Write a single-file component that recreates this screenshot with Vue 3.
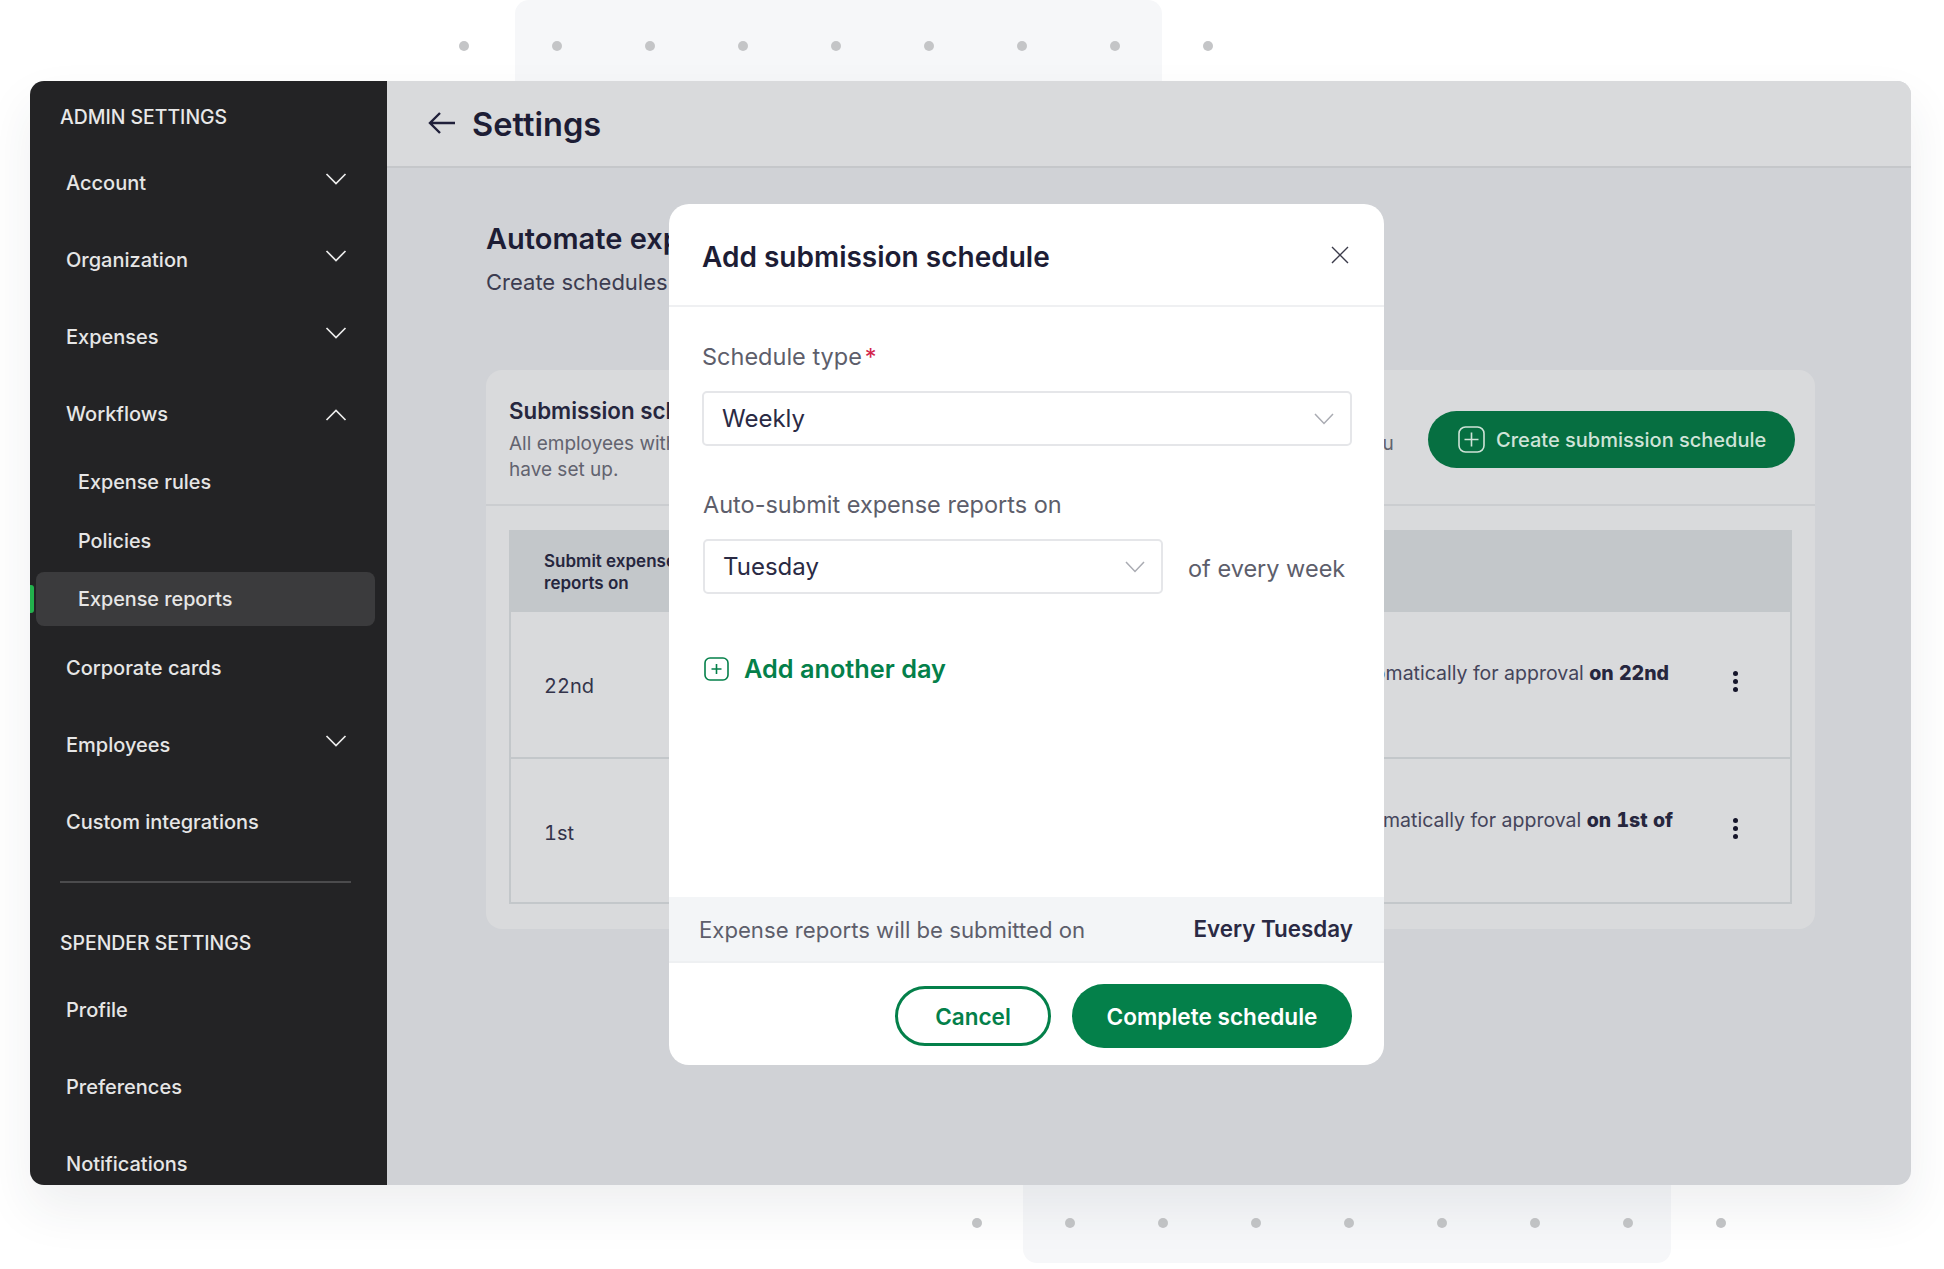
<script setup>
const dots = Array.from({ length: 9 }, (_, i) => i)
const adminTop = [
  { label: 'Account', chevron: 'down' },
  { label: 'Organization', chevron: 'down' },
  { label: 'Expenses', chevron: 'down' },
  { label: 'Workflows', chevron: 'up' }
]
const subItems = [
  { label: 'Expense rules', active: false },
  { label: 'Policies', active: false },
  { label: 'Expense reports', active: true }
]
const adminBottom = [
  { label: 'Corporate cards' },
  { label: 'Employees', chevron: 'down' },
  { label: 'Custom integrations' }
]
const spender = ['Profile', 'Preferences', 'Notifications']
</script>

<template>
  <div class="stage">
    <div class="deco deco-top">
      <div class="patch"></div>
      <div class="dots"><span v-for="d in dots" :key="d" class="dot"></span></div>
    </div>
    <div class="deco deco-bottom">
      <div class="patch"></div>
      <div class="dots"><span v-for="d in dots" :key="d" class="dot"></span></div>
    </div>

    <div class="window">
      <aside class="sidebar">
        <div class="section-title first">ADMIN SETTINGS</div>
        <div v-for="item in adminTop" :key="item.label" class="nav-item">
          <span>{{ item.label }}</span>
          <svg v-if="item.chevron" class="chev" :class="{ up: item.chevron === 'up' }" width="22" height="14" viewBox="0 0 22 14" fill="none">
            <path d="M1.5 2 L11 11.5 L20.5 2" stroke="#ECECEC" stroke-width="1.7" />
          </svg>
        </div>
        <div v-for="item in subItems" :key="item.label" class="sub-item" :class="{ active: item.active }">
          <i v-if="item.active" class="marker"></i>
          <span class="sub-pill">{{ item.label }}</span>
        </div>
        <div v-for="item in adminBottom" :key="item.label" class="nav-item">
          <span>{{ item.label }}</span>
          <svg v-if="item.chevron" class="chev" width="22" height="14" viewBox="0 0 22 14" fill="none">
            <path d="M1.5 2 L11 11.5 L20.5 2" stroke="#ECECEC" stroke-width="1.7" />
          </svg>
        </div>
        <div class="side-divider"></div>
        <div class="section-title second">SPENDER SETTINGS</div>
        <div v-for="label in spender" :key="label" class="nav-item">
          <span>{{ label }}</span>
        </div>
      </aside>

      <main class="main">
        <header class="topbar">
          <svg class="back" width="28" height="24" viewBox="0 0 28 24" fill="none">
            <path d="M27 12 H2 M12 2 L2 12 L12 22" stroke="#20203A" stroke-width="2.4" />
          </svg>
          <h1>Settings</h1>
        </header>

        <section class="content">
          <h2>Automate expense report submissions</h2>
          <p class="lead">Create schedules to submit expense reports automatically</p>

          <div class="card">
            <div class="card-head">
              <div class="card-copy">
                <h3>Submission schedules</h3>
                <p>All employees with corporate cards will have expenses auto-submitted as per these schedules you<br />have set up.</p>
              </div>
              <button class="create-btn">
                <svg width="27" height="27" viewBox="0 0 27 27" fill="none">
                  <rect x="1" y="1" width="25" height="25" rx="6.5" stroke="#CFE3D8" stroke-width="1.6" />
                  <path d="M13.5 6.5 V20.5 M6.5 13.5 H20.5" stroke="#CFE3D8" stroke-width="1.6" />
                </svg>
                <span>Create submission schedule</span>
              </button>
            </div>
            <div class="table-wrap">
              <div class="table">
                <div class="thead">
                  <div class="th">Submit expense<br />reports on</div>
                </div>
                <div class="tr">
                  <div class="td-date">22nd</div>
                  <div class="td-desc desc-a">Expenses are auto-submitted automatically for approval <b>on 22nd</b></div>
                  <div class="kebab"><i></i><i></i><i></i></div>
                </div>
                <div class="tr">
                  <div class="td-date">1st</div>
                  <div class="td-desc desc-b">Expenses are auto-submitted automatically for approval <b>on 1st of</b></div>
                  <div class="kebab"><i></i><i></i><i></i></div>
                </div>
              </div>
            </div>
          </div>
        </section>
      </main>
    </div>

    <div class="modal">
      <div class="modal-head">
        <h2>Add submission schedule</h2>
        <svg width="18" height="18" viewBox="0 0 18 18" fill="none">
          <path d="M1 1 L17 17 M17 1 L1 17" stroke="#3B3B4A" stroke-width="1.4" />
        </svg>
      </div>
      <div class="modal-body">
        <label class="label">Schedule type<em>*</em></label>
        <div class="select">
          <span>Weekly</span>
          <svg width="20" height="12" viewBox="0 0 20 12" fill="none"><path d="M1 1 L10 10.5 L19 1" stroke="#A9ABB2" stroke-width="1.5" /></svg>
        </div>
        <label class="label label-2">Auto-submit expense reports on</label>
        <div class="day-row">
          <div class="select day">
            <span>Tuesday</span>
            <svg width="20" height="12" viewBox="0 0 20 12" fill="none"><path d="M1 1 L10 10.5 L19 1" stroke="#A9ABB2" stroke-width="1.5" /></svg>
          </div>
          <span class="every">of every week</span>
        </div>
        <div class="add-day">
          <svg width="25" height="24" viewBox="0 0 25 24" fill="none">
            <rect x="1" y="1" width="23" height="22" rx="5" stroke="#04804A" stroke-width="1.6" />
            <path d="M12.5 7 V17 M7.5 12 H17.5" stroke="#04804A" stroke-width="1.6" />
          </svg>
          <span>Add another day</span>
        </div>
      </div>
      <div class="summary">
        <span>Expense reports will be submitted on</span>
        <b>Every Tuesday</b>
      </div>
      <div class="modal-foot">
        <button class="btn-cancel">Cancel</button>
        <button class="btn-complete">Complete schedule</button>
      </div>
    </div>
  </div>
</template>

<style scoped>
.stage {
  position: relative;
  width: 1944px;
  height: 1269px;
  overflow: hidden;
  background: #fff;
  font-family: Inter, "Liberation Sans", sans-serif;
  color: #24243c;
  padding: 81px 33px 0 30px;
  box-sizing: border-box;
}
.deco { position: absolute; }
.deco-top { left: 459px; top: 0; width: 760px; height: 81px; }
.deco-bottom { left: 972px; top: 1185px; width: 760px; height: 78px; }
.patch { position: absolute; background: #f6f7f9; }
.deco-top .patch { left: 56px; top: 0; width: 647px; height: 81px; border-top-left-radius: 14px; border-top-right-radius: 14px; }
.deco-bottom .patch { left: 51px; top: 0; width: 648px; height: 78px; border-bottom-left-radius: 14px; border-bottom-right-radius: 14px; }
.dots { position: absolute; left: 0; display: flex; gap: 83px; }
.deco-top .dots { top: 41px; }
.deco-bottom .dots { top: 33px; }
.dot { width: 10px; height: 10px; border-radius: 50%; background: #c4c5c7; }

.window {
  position: relative;
  display: flex;
  width: 1881px;
  height: 1104px;
  border-radius: 14px;
  overflow: hidden;
  box-shadow: 0 24px 50px rgba(40, 50, 70, 0.08);
}
.sidebar {
  flex: 0 0 357px;
  background: #232325;
  color: #e6e6e6;
  overflow: hidden;
  box-sizing: border-box;
}
.section-title {
  font-size: 19.4px;
  line-height: 24px;
  font-weight: 500;
  padding-left: 30px;
  color: #e8e8e8;
}
.section-title.first { margin-top: 24px; margin-bottom: 15.5px; }
.section-title.second { margin-top: 48px; margin-bottom: 16.5px; }
.nav-item {
  height: 77px;
  flex: none;
  display: flex;
  align-items: center;
  justify-content: space-between;
  padding: 0 40px 0 36px;
  font-size: 20px;
  font-weight: 500;
}
.chev { margin-top: -9px; }
.chev.up { transform: rotate(180deg); margin-top: 1px; }
.sub-item {
  position: relative;
  height: 59px;
  display: flex;
  align-items: center;
  font-size: 19.8px;
  font-weight: 500;
}
.sub-pill {
  flex: 1;
  margin: 0 12px 0 6px;
  height: 54px;
  line-height: 54px;
  padding-left: 42px;
  border-radius: 8px;
}
.sub-item.active .sub-pill { background: #3b3b3d; margin-top: -3px; }
.marker {
  position: absolute;
  left: 0;
  top: 14px;
  width: 4px;
  height: 28px;
  background: #22b14c;
  border-radius: 0 3px 3px 0;
}
.side-divider { height: 2px; margin: 20px 36px 0 30px; background: #4b4b4d; }

.main { flex: 1; background: #d0d2d6; min-width: 0; }
.topbar {
  height: 87px;
  box-sizing: border-box;
  background: #d9dadc;
  border-bottom: 2px solid #c5c7ca;
  display: flex;
  align-items: center;
  padding-left: 41px;
  gap: 16px;
}
.topbar h1 { margin: 1px 0 0; font-size: 32.6px; line-height: 40px; font-weight: 600; color: #1d1d35; }
.back { margin-top: -1px; }
.content { padding: 0 96px 0 99px; }
.content h2 {
  margin: 0;
  padding-top: 51px;
  font-size: 29px;
  line-height: 40px;
  font-weight: 600;
  color: #1d1d35;
  white-space: nowrap;
}
.lead { margin: 8px 0 0; font-size: 22px; line-height: 30px; color: #3c3c50; white-space: nowrap; }
.card {
  margin-top: 73px;
  height: 559px;
  background: #d9dadc;
  border-radius: 16px;
}
.card-head {
  height: 136px;
  box-sizing: border-box;
  border-bottom: 2px solid #cbcdd0;
  padding: 22px 20px 0 23px;
  display: flex;
  justify-content: space-between;
  align-items: flex-start;
}
.card-copy h3 { margin: 4px 0 0; font-size: 22.3px; line-height: 30px; font-weight: 600; color: #26263e; white-space: nowrap; }
.card-copy p { margin: 5px 0 0; font-size: 19px; line-height: 26px; color: #62636f; white-space: nowrap; }
.create-btn {
  margin-top: 19px;
  flex: none;
  width: 367px;
  height: 57px;
  border: 0;
  border-radius: 29px;
  background: #066f41;
  color: #cfe3d8;
  display: flex;
  align-items: center;
  gap: 11px;
  padding-left: 30px;
  font: 500 20px Inter, "Liberation Sans", sans-serif;
}
.table-wrap { padding: 24px 23px 0 23px; }
.table { border: 2px solid #c3c7ca; border-top: 0; height: 374px; box-sizing: border-box; }
.thead { height: 82px; margin: 0 -2px; background: #c3c7ca; display: flex; align-items: center; padding: 2px 0 0 35px; box-sizing: border-box; }
.th { font-size: 17px; line-height: 22px; font-weight: 600; color: #26263e; }
.tr {
  height: 145px;
  position: relative;
}
.tr + .tr { border-top: 2px solid #c3c7ca; }
.td-date { position: absolute; left: 33px; top: 60px; font-size: 20px; line-height: 28px; color: #33334a; font-variant-numeric: tabular-nums; }
.td-desc {
  position: absolute;
  top: 47px;
  font-size: 19.5px;
  line-height: 28px;
  color: #44445a;
  white-space: nowrap;
}
.td-desc b { font-weight: 800; color: #26263e; font-variant-numeric: tabular-nums; }
.desc-a { right: 121px; }
.desc-b { right: 117px; }
.kebab {
  position: absolute;
  left: 1222px;
  top: 59px;
  display: flex;
  flex-direction: column;
  gap: 3px;
}
.kebab i { width: 5px; height: 5px; border-radius: 50%; background: #15152a; }

.modal {
  position: absolute;
  left: 669px;
  top: 204px;
  width: 715px;
  height: 861px;
  background: #fff;
  border-radius: 20px;
  display: flex;
  flex-direction: column;
  overflow: hidden;
}
.modal-head {
  height: 103px;
  flex: none;
  box-sizing: border-box;
  border-bottom: 2px solid #eff0f2;
  display: flex;
  align-items: center;
  justify-content: space-between;
  padding: 4px 35px 0 33px;
}
.modal-head h2 { margin: 0; font-size: 28px; line-height: 36px; font-weight: 600; color: #1d1d35; }
.modal-head svg { margin-top: -4px; }
.modal-body { flex: 1; padding: 34px 32px 0 33px; }
.label { display: block; font-size: 23.5px; line-height: 32px; color: #5d5e6b; }
.label em { color: #d3244a; font-style: normal; margin-left: 3px; }
.label-2 { margin-top: 43px; padding-left: 1px; }
.select {
  box-sizing: border-box;
  margin-top: 18px;
  height: 55px;
  border: 2px solid #e5e6e9;
  border-radius: 5px;
  display: flex;
  align-items: center;
  justify-content: space-between;
  padding: 0 16px 0 18px;
  font-size: 24px;
  color: #2a2a44;
}
.day-row { display: flex; align-items: flex-start; margin-left: 1px; }
.day { width: 460px; flex: none; margin-top: 18px; }
.every { margin: 32px 0 0 25px; font-size: 23.5px; line-height: 32px; color: #5d5e6b; white-space: nowrap; }
.add-day {
  margin-top: 59px;
  margin-left: 2px;
  display: flex;
  align-items: center;
  gap: 15px;
  font-size: 25.3px;
  line-height: 32px;
  font-weight: 600;
  color: #04804a;
}
.summary {
  flex: none;
  height: 66px;
  box-sizing: border-box;
  background: #f3f5f7;
  border-bottom: 2px solid #eef0f2;
  display: flex;
  align-items: center;
  justify-content: space-between;
  padding: 2px 31px 0 30px;
  font-size: 22.15px;
  color: #5d5e6b;
}
.summary b { font-weight: 600; font-size: 22.4px; color: #2a2a44; margin-top: -3px; }
.modal-foot {
  flex: none;
  height: 102px;
  box-sizing: border-box;
  display: flex;
  align-items: center;
  justify-content: flex-end;
  gap: 21px;
  padding: 4px 32px 0 0;
}
.btn-cancel {
  width: 156px;
  height: 60px;
  box-sizing: border-box;
  border: 3px solid #04804a;
  border-radius: 30px;
  background: #fff;
  color: #04804a;
  font: 600 22.5px Inter, "Liberation Sans", sans-serif;
}
.btn-complete {
  width: 280px;
  height: 64px;
  border: 0;
  border-radius: 32px;
  background: #04804a;
  color: #fff;
  font: 600 22.6px Inter, "Liberation Sans", sans-serif;
}
</style>
